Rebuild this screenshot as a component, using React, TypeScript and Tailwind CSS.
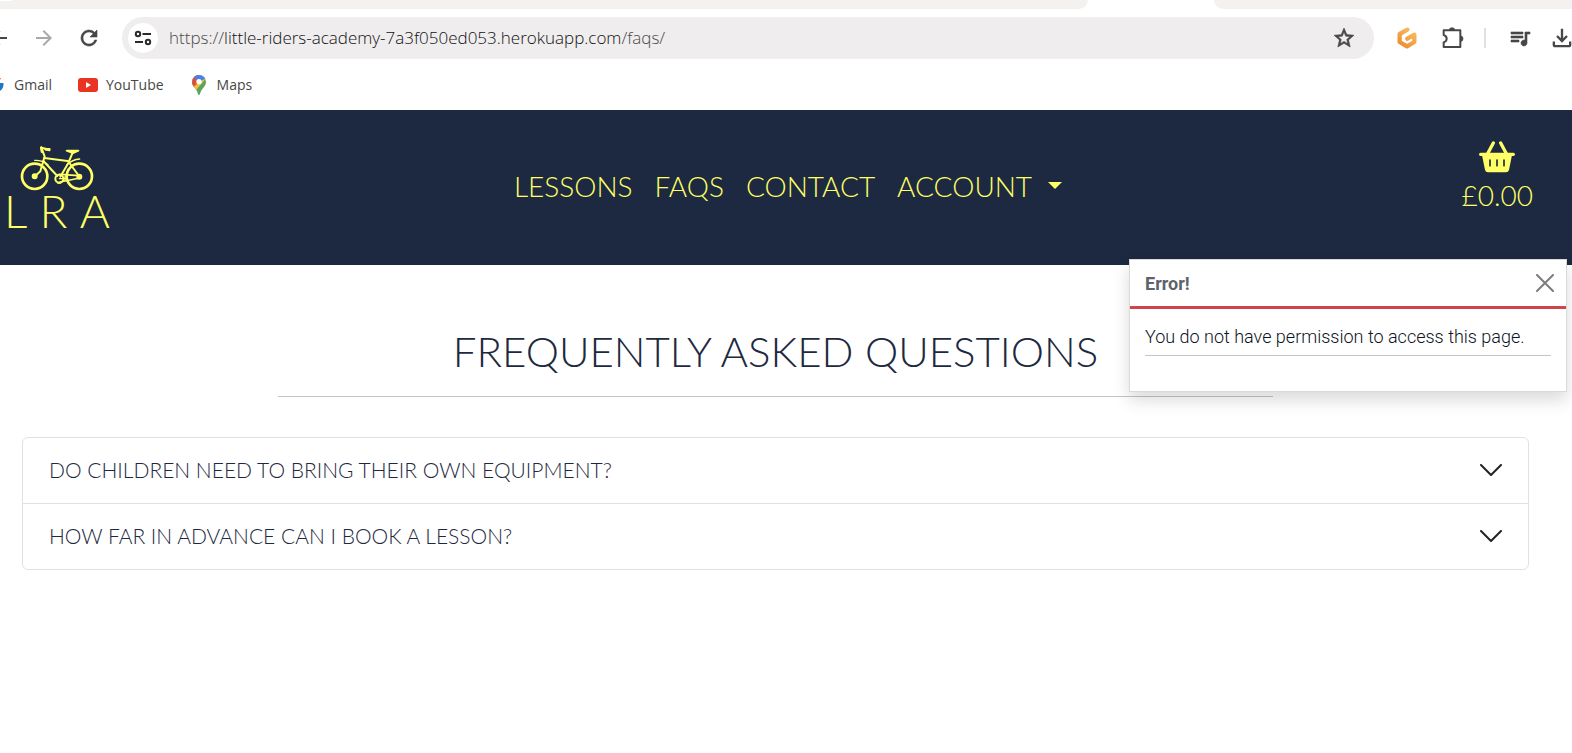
import React from "react";
import { MdArrowBack, MdArrowForward, MdRefresh, MdStarBorder, MdOutlineFileDownload, MdQueueMusic } from "react-icons/md";
import { FcGoogle } from "react-icons/fc";

const display = "font-['Lato',sans-serif] font-light uppercase";
const boldIcon = "[&>path:last-child]:stroke-current [&>path:last-child]:[stroke-width:0.6]";

function TuneIcon() {
  return (
    <svg viewBox="0 0 18 18" className="size-[18px]" fill="none" stroke="#2b2b2b" strokeWidth="2">
      <circle cx="4" cy="5" r="2.2" />
      <path d="M8.5 5H17M1 13h8" />
      <circle cx="14" cy="13" r="2.2" />
    </svg>
  );
}

function GitpodIcon() {
  return (
    <svg viewBox="0 0 60 66" className="h-[22px] w-5" fill="none" strokeLinejoin="round" strokeLinecap="round">
      <defs>
        <linearGradient id="pod" x1="0" y1="1" x2="0.6" y2="0">
          <stop offset="0" stopColor="#ee8a2c" />
          <stop offset="1" stopColor="#f7b85c" />
        </linearGradient>
      </defs>
      <path d="M31 8 8 21v24l22 13 22-13V23L31 35" stroke="url(#pod)" strokeWidth="13" />
    </svg>
  );
}

function PuzzleIcon() {
  return (
    <svg viewBox="0 0 66 66" className="size-[22px]" fill="none" stroke="#474747" strokeWidth="6" strokeLinejoin="round">
      <path d="M5 10H55V60H5V46C17 42 17 28 5 24Z" />
      <path d="M22 9a8 7 0 0 1 16 0ZM56 27a7 8 0 0 1 0 16Z" fill="#474747" strokeWidth="2" />
    </svg>
  );
}

function YouTubeIcon() {
  return (
    <svg viewBox="0 0 20 14" className="h-[14px] w-5">
      <rect width="20" height="14" rx="3" fill="#ea3323" />
      <path d="M8 4v6l5-3z" fill="#fff" />
    </svg>
  );
}

function MapsIcon() {
  return (
    <svg viewBox="0 0 42 60" className="h-5 w-[14px]">
      <defs>
        <clipPath id="pin">
          <path d="M21 0a21 21 0 0 1 21 21c0 14-15 20-18 36q-3 6-6 0C15 41 0 35 0 21A21 21 0 0 1 21 0Z" />
        </clipPath>
      </defs>
      <g clipPath="url(#pin)">
        <path d="M0 0h42v60H0z" fill="#58a55c" />
        <path d="M0 0h42v10L12 46 0 34Z" fill="#f1bf42" />
        <path d="M0 0h21v21L4 36 0 34Z" fill="#d85140" />
        <path d="M5 7 12-4h30v14L21 21Z" fill="#4a80ec" />
        <circle cx="21" cy="20" r="8" fill="#fff" />
      </g>
    </svg>
  );
}

function BicycleIcon() {
  return (
    <svg viewBox="60 108 222 138" className="h-[46px] w-[74px]" fill="none" stroke="#ffff66" strokeWidth="6" strokeLinecap="round" strokeLinejoin="round">
      <circle cx="104" cy="199" r="38" strokeWidth="8" />
      <circle cx="238" cy="199" r="38" strokeWidth="8" />
      <path d="M148 121 137 116 124 113 134 139 128 160 121 184 105 199" />
      <path d="M137 118h11M124 113l2 12" strokeWidth="8" />
      <path d="M133 144 208 154 181 200M130 153 172 198M218 128 206 156 237 198" />
      <path d="M200 122H235L219 129Z" fill="#ffff66" />
      <path d="M104 151Q126 150 144 164M201 164Q217 149 239 147" strokeWidth="4" />
      <path d="M178 193 238 197M180 216 240 204" strokeWidth="5" />
      <circle cx="178" cy="206" r="12" />
      <path d="M178 206h20M195 199v13M173 219h9" strokeWidth="4" />
      <circle cx="104" cy="199" r="6" fill="#ffff66" />
      <circle cx="238" cy="200" r="6" fill="#ffff66" />
    </svg>
  );
}

function BasketIcon() {
  return (
    <svg viewBox="0 0 108 96" className="h-8 w-9" fill="none" stroke="currentColor" strokeLinecap="round" strokeLinejoin="round">
      <path d="M43 6 27 36M65 6 81 36" strokeWidth="10" />
      <path d="M5 40H103" strokeWidth="10" />
      <path d="M13 42H95L86 86Q85 90 81 90H27Q23 90 22 86Z" fill="currentColor" strokeWidth="8" />
      <path d="M33 57V74M54 57V74M75 57V74" stroke="#1d2940" strokeWidth="5" />
    </svg>
  );
}

function BrowserChrome() {
  return (
    <div className="bg-white text-[#474747]">
      <div className="flex h-[9px]">
        <div className="flex-1 rounded-br-xl bg-[#f3f2f1]">
          <div className="h-px w-3 bg-white" />
        </div>
        <div className="w-[126px]" />
        <div className="w-[358px] rounded-bl-xl bg-[#f3f2f1]" />
      </div>
      <div className="flex h-[58px] items-center">
        <button aria-label="Back" className="-ml-[13px]"><MdArrowBack size={24} /></button>
        <button aria-label="Forward" className="ml-[21px] text-[#a8a8a8]"><MdArrowForward size={24} /></button>
        <button aria-label="Reload" className="ml-[21px]"><MdRefresh size={24} className={boldIcon} /></button>
        <div className="ml-[21px] flex h-[42px] min-w-0 flex-1 items-center rounded-full bg-[#efedee] pr-[18px] pl-[6px] font-['Open_Sans',sans-serif]">
          <button aria-label="Site information" className="flex size-[30px] items-center justify-center rounded-full bg-white"><TuneIcon /></button>
          <div className="ml-[11px] flex-1 text-[17px] font-light text-[#4a4a4a]">
            https://<span className="text-[#111111]">little-riders-academy-7a3f050ed053.herokuapp.com</span>/faqs/
          </div>
          <button aria-label="Bookmark this page"><MdStarBorder size={24} className={boldIcon} /></button>
        </div>
        <button aria-label="Gitpod" className="ml-[23px]"><GitpodIcon /></button>
        <button aria-label="Extensions" className="ml-[25px]"><PuzzleIcon /></button>
        <div className="ml-5 h-5 w-[2px] bg-[#e0e0e0]" />
        <button aria-label="Media controls" className="ml-[22px]"><MdQueueMusic size={24} className={boldIcon} /></button>
        <button aria-label="Downloads" className="ml-4 -mr-1"><MdOutlineFileDownload size={28} /></button>
      </div>
      <nav aria-label="Bookmarks" className="flex h-[43px] items-center pb-2 font-['Open_Sans',sans-serif] text-[14px]">
        <a href="#gmail" className="-ml-[14px] flex items-center gap-[9px]"><FcGoogle size={19} />Gmail</a>
        <a href="#youtube" className="ml-[26px] flex items-center gap-2"><YouTubeIcon />YouTube</a>
        <a href="#maps" className="ml-7 flex items-center gap-[11px]"><MapsIcon />Maps</a>
      </nav>
    </div>
  );
}

function Header() {
  return (
    <header className={`grid h-[155px] grid-cols-[1fr_auto_1fr] items-center bg-[#1d2940] text-[#ffff66] ${display}`}>
      <a href="#home" className="ml-1 flex w-[106px] flex-col items-center">
        <BicycleIcon />
        <span className="flex w-full justify-between text-[46px] leading-[38px]">
          <span>L</span><span>R</span><span>A</span>
        </span>
      </a>
      <nav aria-label="Main" className="flex items-center gap-[22px] pb-1 pl-1 text-[28px] leading-8">
        <a href="#lessons">Lessons</a>
        <a href="#faqs">FAQs</a>
        <a href="#contact">Contact</a>
        <button className="flex items-center gap-4 uppercase">
          Account
          <svg viewBox="0 0 14 7" className="h-[7px] w-[14px]"><path d="M0 0h14L7 7z" fill="currentColor" /></svg>
        </button>
      </nav>
      <a href="#basket" className="mr-[39px] mb-[18px] flex flex-col items-center justify-self-end">
        <BasketIcon />
        <span className="text-[28px] leading-[44px]">£0.00</span>
      </a>
    </header>
  );
}

function ErrorToast() {
  return (
    <div role="alert" className="absolute top-[259px] right-[5px] w-[438px] border border-black/15 bg-white font-['Roboto',sans-serif] text-[18px] shadow-[0_8px_16px_rgba(0,0,0,0.15)]">
      <div className="flex h-[49px] items-center justify-between border-b-3 border-[#cf434c] pr-3 pl-[15px]">
        <strong className="font-bold text-[#5c636a]">Error!</strong>
        <button aria-label="Close">
          <svg viewBox="0 0 18 18" className="size-[18px]" stroke="#7c7c7c" strokeWidth="2" strokeLinecap="round"><path d="m1 1 16 16M17 1 1 17" /></svg>
        </button>
      </div>
      <div className="px-[15px] pt-[14px] pb-[35px]">
        <p className="border-b border-[#c4c5cc] pb-[5px] leading-[27px] font-light text-[#0c1222]">You do not have permission to access this page.</p>
      </div>
    </div>
  );
}

const questions = ["Do children need to bring their own equipment?", "How far in advance can I book a lesson?"];

export default function App() {
  return (
    <div className="relative min-h-screen overflow-hidden bg-white">
      <BrowserChrome />
      <Header />
      <main className={`pr-[43px] pl-[22px] text-[#1d2940] ${display}`}>
        <h1 className="mx-auto mt-[61px] w-[66%] border-b border-[#c4c5cc] pb-5 text-center text-[42px] leading-[50px]">Frequently asked questions</h1>
        <div className="mt-10 divide-y divide-[#dee2e6] rounded-md border border-[#dee2e6]">
          {questions.map((q) => (
            <h2 key={q}>
              <button aria-expanded="false" className="flex h-[65px] w-full items-center justify-between px-[26px] pb-[2px] text-left text-[21px] uppercase">
                {q}
                <svg viewBox="0 0 22 12" className="h-3 w-[22px]" fill="none" stroke="#212529" strokeWidth="2" strokeLinecap="round" strokeLinejoin="round"><path d="m1 1 10 10L21 1" /></svg>
              </button>
            </h2>
          ))}
        </div>
      </main>
      <ErrorToast />
    </div>
  );
}
